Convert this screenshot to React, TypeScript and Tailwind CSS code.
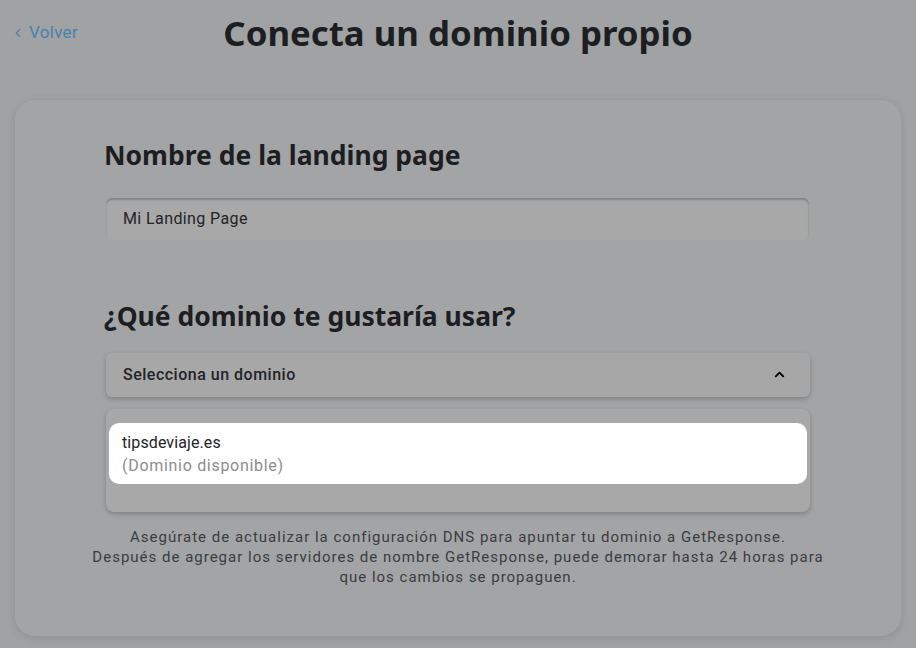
import { ChevronLeft, ChevronUp } from 'lucide-react';

const heading = { fontFamily: '"Noto Sans", "Open Sans", sans-serif' };
const body = { fontFamily: 'Roboto, "Noto Sans", sans-serif' };

const domains = [{ name: 'tipsdeviaje.es', status: '(Dominio disponible)' }];

const App = () => {
  return (
    <div className="min-h-[648px] w-[916px] bg-[#a1a2a4] overflow-hidden" style={body}>
      <div className="relative h-[100px]">
        <button className="absolute left-[11px] top-[20px] flex items-center gap-[4px] text-[17px] tracking-[0.3px] text-[#4a80ad]">
          <ChevronLeft className="w-[14px] h-[14px]" strokeWidth={2} />
          <span>Volver</span>
        </button>
        <h1
          className="pt-[7px] text-center text-[34.8px] font-bold text-[#1c1e21]"
          style={heading}
        >
          Conecta un dominio propio
        </h1>
      </div>

      <div className="mx-[15px] h-[536px] rounded-[20px] bg-[#a3a4a6] shadow-[0_2px_10px_rgba(0,0,0,0.12)] px-[91px] pt-[36px]">
        <h2 className="-ml-[2px] text-[26.5px] font-bold text-[#1c1e21]" style={heading}>
          Nombre de la landing page
        </h2>
        <div className="mt-[22px] h-[42px] w-[703px] rounded-[6px] bg-[#a8a8a8] shadow-[inset_0_2px_2px_rgba(0,0,0,0.22)] flex items-center px-[17px] text-[16px] tracking-[0.4px] text-[#222427]">
          Mi Landing Page
        </div>

        <h2 className="-ml-[2px] mt-[57px] text-[26.5px] font-bold text-[#1c1e21]" style={heading}>
          ¿Qué dominio te gustaría usar?
        </h2>
        <div className="mt-[16px] h-[44px] w-[704px] rounded-[6px] bg-[#a7a7a7] shadow-[0_2px_5px_rgba(0,0,0,0.22)] flex items-center justify-between px-[17px]">
          <span className="text-[16px] font-medium tracking-[0.5px] text-[#222427]">Selecciona un dominio</span>
          <ChevronUp className="w-[15px] h-[15px] mr-[6px] text-black" strokeWidth={3} />
        </div>

        <div className="mt-[12px] h-[103px] w-[704px] rounded-[8px] bg-[#a8a8a8] shadow-[0_2px_5px_rgba(0,0,0,0.22)] px-[3px] pt-[14px]">
          {domains.map((d) => (
            <div key={d.name} className="h-[61px] rounded-[10px] bg-white px-[13px] pt-[8px] leading-[23px]">
              <div className="text-[16px] text-[#222427] tracking-[0.1px]">{d.name}</div>
              <div className="text-[16px] text-[#8b8c8e] tracking-[0.7px]">{d.status}</div>
            </div>
          ))}
        </div>

        <p className="mt-[15px] -mx-[40px] text-center text-[15px] leading-[20px] tracking-[1px] text-[#3a3c40]">
          Asegúrate de actualizar la configuración DNS para apuntar tu dominio a GetResponse.
          <br />
          Después de agregar los servidores de nombre GetResponse, puede demorar hasta 24 horas para
          <br />
          que los cambios se propaguen.
        </p>
      </div>
    </div>
  );
};

export default App;
